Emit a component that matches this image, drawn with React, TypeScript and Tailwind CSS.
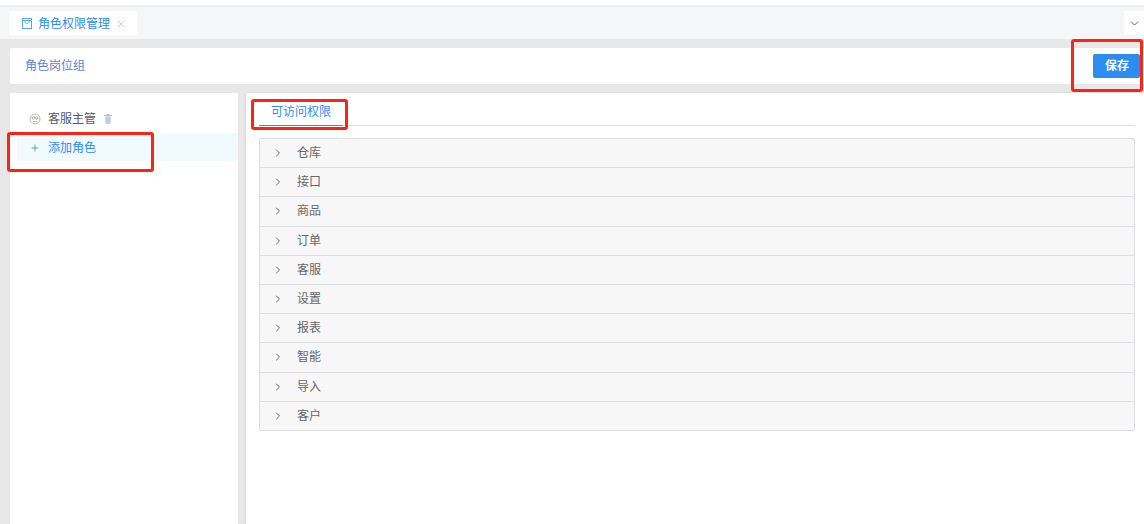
import React from "react";
import { ChevronDown, ChevronRight, Plus, X } from "lucide-react";

const modules = ["仓库", "接口", "商品", "订单", "客服", "设置", "报表", "智能", "导入", "客户"];

const Mark = (props: { className: string }) => (
    <div className={"absolute border-[3px] border-[#fb2416] rounded-[3px] pointer-events-none " + props.className}></div>
);

const App = () => {
    return (
        <div className="relative w-[1144px] h-[524px] overflow-hidden flex flex-col bg-[#e8e8e8] text-[12px] font-['Liberation_Sans','Noto_Sans_CJK_SC',sans-serif]">
            {/* top strip */}
            <div className="h-[7px] bg-white border-b-2 border-[#eceef1]"></div>

            {/* tab bar */}
            <div className="h-[32px] bg-[#f5f6f8] flex items-start justify-between pt-[4px] pl-[9px]">
                <div className="h-[24px] w-[128px] bg-white rounded-[2px] flex items-center pl-[13px] pt-[1px] text-[#2d8cf0]">
                    <svg width="10" height="11" viewBox="0 0 10 11" fill="none" stroke="#5aa5f2" strokeWidth="1">
                        <rect x="0.5" y="0.5" width="9" height="10" />
                        <path d="M0.5 2.5 H9.5 M3 2.5 V4 C3 6 7 6 7 4 V2.5" />
                    </svg>
                    <span className="ml-[6px] leading-none">角色权限管理</span>
                    <X size={12} strokeWidth={1} color="#999" className="ml-[5px]" />
                </div>
                <div className="h-[24px] w-[20px] bg-white flex items-center justify-center">
                    <ChevronDown size={13} strokeWidth={1.75} color="#555b66" />
                </div>
            </div>

            {/* header */}
            <div className="mt-[9px] ml-[10px] h-[36px] bg-white rounded-l-[2px] flex items-center justify-between pl-[15px] pr-[4px]">
                <span className="text-[#5b7fd8]">角色岗位组</span>
                <button className="w-[47px] h-[24px] bg-[#2d8cf0] rounded-[2px] text-white font-bold pl-[1px]">保存</button>
            </div>

            {/* body */}
            <div className="mt-[9px] ml-[10px] flex-1 flex gap-[8px] min-h-0">
                <div className="w-[228px] bg-white rounded-t-[2px] pt-[11px] pl-[7px]">
                    <div className="h-[29px] flex items-center pl-[12px] text-[#515a6e]">
                        <svg width="12" height="12" viewBox="0 0 12 12" fill="none" stroke="#c4b6a4" strokeWidth="1">
                            <circle cx="6" cy="6" r="5" />
                            <circle cx="4.3" cy="5" r="1.2" stroke="#a9a9b5" />
                            <circle cx="7.7" cy="5" r="1.2" stroke="#a9a9b5" />
                            <path d="M4 8.5 H8" stroke="#d9b98c" />
                        </svg>
                        <span className="ml-[7px]">客服主管</span>
                        <svg width="8" height="10" viewBox="0 0 8 10" className="ml-[8px]">
                            <path d="M0 1.5 H8 M3 1 V0.5 H5 V1" fill="none" stroke="#a9b4e0" strokeWidth="1" />
                            <path d="M1 2.5 H7 L6.5 10 H1.5 Z" fill="#c3cbec" />
                        </svg>
                    </div>
                    <div className="h-[28px] bg-[#f0faff] flex items-center pl-[13px] pt-[1px] text-[#2d8cf0]">
                        <Plus size={10} strokeWidth={1.75} color="#4a78b8" />
                        <span className="ml-[8px]">添加角色</span>
                    </div>
                </div>

                <div className="flex-1 bg-white rounded-tl-[2px] pt-[8px] pl-[13px] pr-[9px] shadow-[-1px_0_3px_rgba(0,0,0,0.08)]">
                    <div className="h-[25px] border-b border-[#dcdee2] relative">
                        <div className="w-[84px] h-[25px] border-b border-[#2d8cf0] text-[#2d8cf0] pl-[12px] pt-[2px] leading-[18px]">可访问权限</div>
                    </div>
                    <div className="mt-[12px] border border-[#dcdee2] rounded-[2px] bg-[#f7f7f7]">
                        {modules.map((name, index) => (
                            <div
                                key={name}
                                className={"flex items-center pl-[12px] text-[#666] " + (index > 0 ? "h-[29.2px] border-t border-[#dcdee2]" : "h-[28.2px]")}
                            >
                                <ChevronRight size={12} strokeWidth={1.75} color="#555" />
                                <span className="ml-[13px]">{name}</span>
                            </div>
                        ))}
                    </div>
                </div>
            </div>

            {/* red annotation boxes */}
            <Mark className="left-[1071px] top-[39px] w-[72px] h-[53px]" />
            <Mark className="left-[251px] top-[99px] w-[97px] h-[31px]" />
            <Mark className="left-[7px] top-[132px] w-[147px] h-[40px]" />
        </div>
    );
};

export default App;
